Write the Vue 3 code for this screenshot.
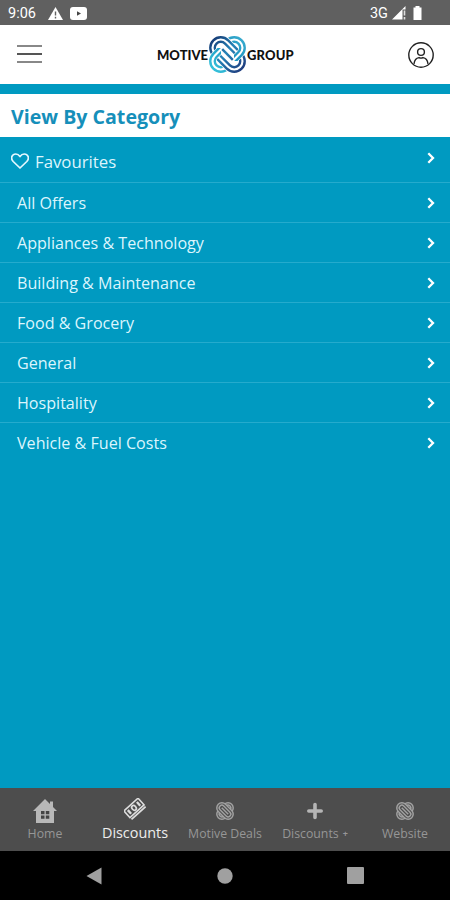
<template>
  <div class="screen">
    <div class="status">
      <span class="time">9:06</span>
      <svg class="warn" width="15" height="13" viewBox="0 0 15 13">
        <path d="M7.5 0L15 13H0Z" fill="#fff" />
        <path d="M7.5 4.5v4M7.5 9.8v1.6" stroke="#606060" stroke-width="1.4" />
      </svg>
      <svg class="video" width="17" height="13" viewBox="0 0 17 13">
        <rect width="17" height="13" rx="3" fill="#fff" />
        <path d="M7 4.3L11 6.5L7 8.7Z" fill="#444" />
      </svg>
      <span class="network">3G</span>
      <svg width="15" height="14" viewBox="0 0 15 14">
        <path d="M0 13.5L13.5 0V3.5H10.5V13.5Z" fill="#fff" />
        <path d="M12.5 4.5v5M12.5 11v2.5" stroke="#ddd" stroke-width="1.6" />
      </svg>
      <svg class="battery" width="9" height="14" viewBox="0 0 9 14">
        <path d="M2.5 0h4v1.5H8.5V14H.5V1.5h2Z" fill="#fff" />
      </svg>
    </div>

    <header class="header">
      <button class="menu" aria-label="Menu"><i></i><i></i><i></i></button>
      <div class="logo">
        <span class="word left">MOTIVE</span>
        <svg class="knot" width="37" height="37" viewBox="0 0 37 37" fill="none">
          <defs>
            <linearGradient id="down" gradientUnits="userSpaceOnUse" x1="-2" y1="18" x2="39" y2="18">
              <stop offset="0" stop-color="#173f79" />
              <stop offset=".45" stop-color="#2584b8" />
              <stop offset="1" stop-color="#203f80" />
            </linearGradient>
            <linearGradient id="up" gradientUnits="userSpaceOnUse" x1="-2" y1="18" x2="39" y2="18">
              <stop offset="0" stop-color="#35c0da" />
              <stop offset=".6" stop-color="#1d94c0" />
              <stop offset="1" stop-color="#36a9cd" />
            </linearGradient>
            <clipPath id="sides">
              <rect x="0" y="12" width="12" height="13" />
              <rect x="25" y="12" width="12" height="13" />
            </clipPath>
          </defs>
          <g transform="rotate(-45 18.5 18.5)" stroke="url(#up)" stroke-width="2.4">
            <rect x="-1.5" y="8" width="40" height="21" rx="10.5" />
            <rect x="3" y="12.5" width="31" height="12" rx="6" />
          </g>
          <g transform="rotate(45 18.5 18.5)">
            <rect x="-1.5" y="8" width="40" height="21" rx="10.5" fill="#fff" stroke="#fff" stroke-width="4" />
            <g stroke="url(#down)" stroke-width="2.4">
              <rect x="-1.5" y="8" width="40" height="21" rx="10.5" />
              <rect x="3" y="12.5" width="31" height="12" rx="6" />
              <path d="M11 18.5H26" />
            </g>
          </g>
          <g clip-path="url(#sides)">
            <g transform="rotate(-45 18.5 18.5)">
              <rect x=".75" y="10.25" width="35.5" height="16.5" rx="8.25" stroke="#fff" stroke-width="8" />
              <g stroke="url(#up)" stroke-width="2.4">
                <rect x="-1.5" y="8" width="40" height="21" rx="10.5" />
                <rect x="3" y="12.5" width="31" height="12" rx="6" />
              </g>
            </g>
          </g>
        </svg>
        <span class="word right">GROUP</span>
      </div>
      <svg class="profile" width="26" height="26" viewBox="0 0 26 26" fill="none" stroke="#222" stroke-width="1.4">
        <circle cx="13" cy="13" r="12.2" />
        <circle cx="13" cy="10" r="3.4" />
        <path d="M6 21.8C6.4 18.3 8.6 16 11 15.6Q13 16.6 15 15.6C17.4 16 19.6 18.3 20 21.8" />
      </svg>
    </header>

    <main class="content">
      <h1 class="title">View By Category</h1>
      <ul class="list">
        <li class="row favourites">
          <svg class="heart" width="18" height="16" viewBox="0 0 18 16" fill="none">
            <path d="M9 15L2.2 8.5C-1 5 1.2 1 4.8 1C6.8 1 8 2.1 9 3.6C10 2.1 11.2 1 13.2 1C16.8 1 19 5 15.8 8.5Z" stroke="#e4f8ff" stroke-width="1.7" stroke-linejoin="round" />
          </svg>
          <span class="name">Favourites</span>
          <svg class="chevron" width="8" height="12" viewBox="0 0 8 12">
            <path d="M1.3 1.3L6 6L1.3 10.7" />
          </svg>
        </li>
        <li v-for="item in categories" :key="item" class="row">
          <span class="name">{{ item }}</span>
          <svg class="chevron" width="8" height="12" viewBox="0 0 8 12">
            <path d="M1.3 1.3L6 6L1.3 10.7" />
          </svg>
        </li>
      </ul>
    </main>

    <nav class="tabs">
      <div v-for="tab in tabs" :key="tab.icon" class="tab" :class="{ active: tab.icon === 'notes' }">
        <div class="icon">
          <svg v-if="tab.icon === 'home'" width="24" height="24" viewBox="0 0 24 24">
            <path d="M12 0L17 5V2.5h3V8L24 12H21V24H3V12H0Z" fill="#b8b8b8" />
            <path d="M8 12h3.5v3.3H8zM12.8 12h3.5v3.3h-3.5zM8 16.5h3.5v3.3H8zM12.8 16.5h3.5v3.3h-3.5z" fill="#444" />
          </svg>
          <svg v-else-if="tab.icon === 'notes'" width="22" height="22" viewBox="0 0 22 22" fill="none" stroke="#ddd">
            <g transform="rotate(-42 11 11)">
              <rect x="1.5" y="5" width="19" height="9" stroke-width="1.6" />
              <path d="M1.5 16.3h19" stroke-width="1.8" />
              <ellipse cx="11" cy="9.5" rx="2" ry="2.6" stroke-width="1.7" />
              <path d="M4.9 7v5M17.1 7v5" stroke-width="2.3" />
            </g>
          </svg>
          <svg v-else-if="tab.icon === 'plus'" width="16" height="18" viewBox="0 0 16 18">
            <path d="M8 2.5v13M1.8 9h12.4" stroke="#b5b5b5" stroke-width="3.6" stroke-linecap="round" />
          </svg>
          <svg v-else width="18" height="18" viewBox="0 0 37 37" fill="none" stroke="#a2a2a2" stroke-width="3">
            <g transform="rotate(-45 18.5 18.5)">
              <rect x="-1" y="8" width="39" height="21" rx="10.5" />
              <rect x="4" y="13" width="29" height="11" rx="5.5" />
            </g>
            <g transform="rotate(45 18.5 18.5)">
              <rect x="-1" y="8" width="39" height="21" rx="10.5" fill="#4d4d4d" />
              <rect x="4" y="13" width="29" height="11" rx="5.5" />
              <path d="M9 18.5H28" />
            </g>
          </svg>
        </div>
        <span class="label">{{ tab.label }}<b v-if="tab.icon === 'plus'" class="small-plus">+</b></span>
      </div>
    </nav>

    <div class="system">
      <svg width="16" height="18" viewBox="0 0 16 18"><path d="M15.5 .5V17.5L.5 9Z" fill="#a0a0a0" /></svg>
      <svg width="16" height="16" viewBox="0 0 16 16"><circle cx="8" cy="8" r="7.7" fill="#a0a0a0" /></svg>
      <svg width="17" height="17" viewBox="0 0 17 17"><rect width="17" height="17" rx="1" fill="#a0a0a0" /></svg>
    </div>
  </div>
</template>

<script setup>
const categories = [
  'All Offers',
  'Appliances & Technology',
  'Building & Maintenance',
  'Food & Grocery',
  'General',
  'Hospitality',
  'Vehicle & Fuel Costs',
]

const tabs = [
  { label: 'Home', icon: 'home' },
  { label: 'Discounts', icon: 'notes' },
  { label: 'Motive Deals', icon: 'knot' },
  { label: 'Discounts', icon: 'plus' },
  { label: 'Website', icon: 'knot-web' },
]
</script>

<style>
body { margin: 0; }
</style>

<style scoped>
.screen {
  display: flex;
  flex-direction: column;
  width: 450px;
  height: 900px;
  overflow: hidden;
  background: #009ac1;
  font-family: "Open Sans", sans-serif;
}
.status {
  display: flex;
  align-items: center;
  height: 25px;
  padding: 1px 28px 0 8px;
  box-sizing: border-box;
  background: #606060;
  color: #fff;
  font-family: Roboto, sans-serif;
  font-size: 14.5px;
}
.warn { margin-left: 12px; }
.video { margin-left: 7px; }
.network { margin-left: auto; margin-right: 4px; font-size: 14.5px; }
.battery { margin-left: 6px; }
.header {
  display: flex;
  align-items: center;
  height: 59px;
  padding: 0 16px 0 17px;
  box-sizing: border-box;
  background: #fff;
}
.menu {
  display: flex;
  flex-direction: column;
  gap: 6px;
  width: 25px;
  padding: 0 0 2px;
  border: 0;
  background: none;
}
.menu i { height: 2px; background: #888; }
.menu i:nth-child(2) { background: #555; }
.logo { display: flex; align-items: center; margin-left: 115px; }
.word { color: #111; font-family: Lato, sans-serif; font-size: 13px; font-weight: 900; line-height: 16px; }
.left { width: 52px; }
.right { width: 48px; margin-left: 1px; letter-spacing: .15px; }
.knot { flex: none; }
.profile { margin-left: auto; }
.content { flex: 1; padding-top: 10px; }
.title {
  height: 43px;
  margin: 0;
  padding-left: 11px;
  background: #fff;
  color: #168fba;
  font-size: 19.6px;
  font-weight: 700;
  line-height: 45px;
}
.list { margin: 0; padding: 0; list-style: none; }
.row {
  display: flex;
  align-items: center;
  justify-content: space-between;
  height: 40px;
  padding: 0 15px 0 17px;
  box-sizing: border-box;
  border-bottom: 1px solid #25abcd;
  color: #dcf5fd;
  font-size: 16.1px;
}
.row:last-child { border-bottom: 0; }
.favourites { height: 46px; padding-left: 11px; }
.favourites .name { flex: 1; margin-left: 6px; padding-top: 3px; font-size: 16.8px; }
.favourites .chevron { margin-bottom: 4px; }
.heart { margin-top: 3px; }
.chevron { fill: none; stroke: #fff; stroke-width: 2.3; }
.tabs {
  display: flex;
  height: 63px;
  background: #4d4d4d;
}
.tab {
  display: flex;
  flex-direction: column;
  align-items: center;
  width: 90px;
  color: #969696;
  font-size: 12.3px;
  white-space: nowrap;
}
.icon {
  display: flex;
  align-items: center;
  justify-content: center;
  height: 24px;
  margin-top: 11px;
}
.label { line-height: 21px; }
.active .icon { margin-top: 9px; }
.active .label { margin-top: 1px; color: #eee; font-size: 14.4px; }
.small-plus { margin-left: 4px; font-size: 9px; vertical-align: 1px; }
.system {
  display: flex;
  align-items: center;
  justify-content: space-between;
  height: 49px;
  padding: 0 86px;
  box-sizing: border-box;
  background: #000;
}
</style>
